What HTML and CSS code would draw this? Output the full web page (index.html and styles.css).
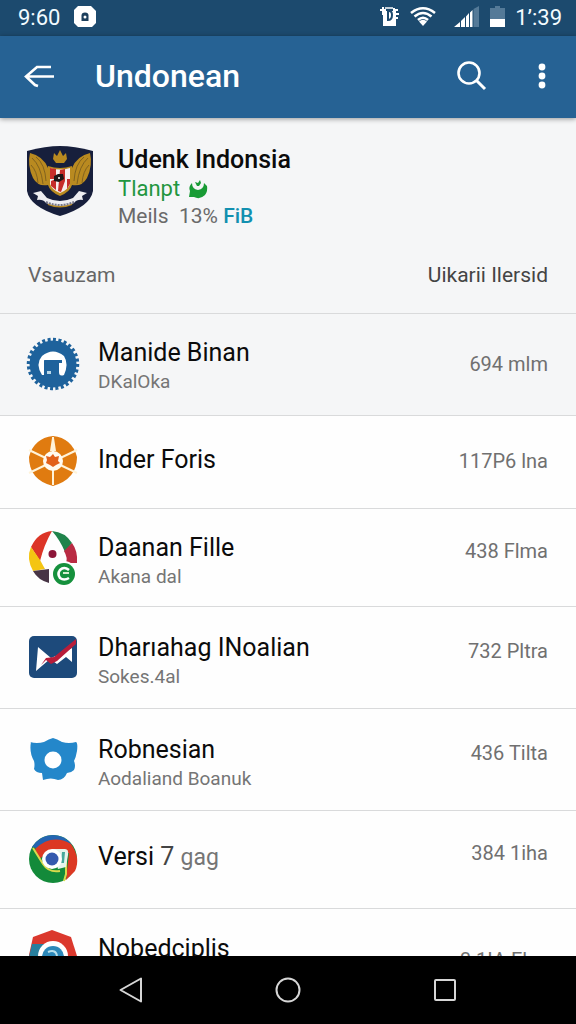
FILE: index.html
```html
<!DOCTYPE html>
<html lang="id">
<head>
<meta charset="utf-8">
<meta name="viewport" content="width=device-width, initial-scale=1">
<title>Undonean</title>
<link rel="stylesheet" href="styles.css">
</head>
<body>
<div class="status">
  <span class="status-time">9:60</span>
  <svg class="status-app" width="22" height="22" viewBox="0 0 22 22"><path d="M4 0h13l5 5v12l-4 4H4l-4-4V4z" fill="#fff"/><path d="M7.500 15V9.500q0-3 3.500-3t3.500 3V15z" fill="#1c3f5c"/><circle cx="11" cy="11" r="1.500" fill="#fff"/></svg>
  <span class="status-icons">
    <svg width="20" height="22" viewBox="0 0 20 22"><path d="M3 5h13v15H3z" fill="#fff"/><path d="M0 4h6M3 1v8M14 2v10M13 4h5M13 8h6M13 12h5" stroke="#fff" stroke-width="2"/><path d="M8 5v9q4 0 4-5 0-4-3-4z" fill="none" stroke="#1c4a6e" stroke-width="2"/><path d="M5 2h8" stroke="#fff" stroke-width="1.5"/></svg>
    <svg width="26" height="20" viewBox="0 0 26 20"><g fill="none" stroke="#fff" stroke-width="2.6"><path d="M1 6Q13-3.500 25 6"/><path d="M4.500 9.500Q13 2.500 21.500 9.500"/><path d="M8 13Q13 8.500 18 13"/></g><path d="M9 14.500Q13 11 17 14.500L13 19z" fill="#fff"/></svg>
    <svg class="signal" width="26" height="22" viewBox="0 0 26 22"><path d="M0 21l6-5v5zM7 15l4-4v10H7zM12 10.500L15 7v14h-3zM16 6.500L18.500 4v17H16z" fill="#fff"/><path d="M19.500 3L25 0v21h-5.500z" fill="#547a98"/></svg>
    <svg class="battery" width="15" height="22" viewBox="0 0 15 22"><path d="M0 2h5V0h5v2h5v11H0z" fill="#547a98"/><path d="M0 13h15v8H0z" fill="#fff"/></svg>
    <span class="status-time">1’:39</span>
  </span>
</div>
<header class="appbar">
  <button class="icon-button" aria-label="Back"><svg width="32" height="26" viewBox="0 0 32 26"><path d="M27 4H13L2 13.500l9 8.500 3 1M2 13.500h28" fill="none" stroke="#fff" stroke-width="2.600"/></svg></button>
  <h1 class="appbar-title">Undonean</h1>
  <button class="icon-button" aria-label="Search"><svg width="32" height="32" viewBox="0 0 32 32"><circle cx="13" cy="13" r="10.500" fill="none" stroke="#fff" stroke-width="2.600"/><path d="M20 20l9 9" stroke="#fff" stroke-width="3"/></svg></button>
  <button class="icon-button more" aria-label="More options"><svg width="8" height="26" viewBox="0 0 8 26"><g fill="#fff"><circle cx="4" cy="4" r="3.400"/><circle cx="4" cy="13" r="3.400"/><circle cx="4" cy="22" r="3.400"/></g></svg></button>
</header>
<main class="content">
  <section class="profile">
    <svg class="crest" width="68" height="72" viewBox="0 0 68 72">
      <path d="M1 6Q20 1 34 1Q48 1 67 6V46Q64 62 34 71Q4 62 1 46z" fill="#171f3c"/>
      <g fill="#b98a20"><path d="M4 8Q17 11 22 23V40Q12 42 7 33Q1 20 4 8zM64 8Q51 11 46 23V40Q56 42 61 33Q67 20 64 8z"/><path d="M28 8l3 3 3-6 3 6 3-3 1 6-3 4h-8l-3-4z"/><path d="M20 53Q34 60 48 53l-2 7q-12 5-24 0z"/></g>
      <g fill="none" stroke="#68501e" stroke-width=".7"><path d="M6 13q9 8 11 26M5 20q6 6 7 18M10 12q9 7 10 24M62 13q-9 8-11 26M63 20q-6 6-7 18M58 12q-9 7-10 24"/></g>
      <path d="M22 21Q34 25 46 21V40Q44 47 34 51Q24 47 22 40z" fill="#b98a20"/>
      <path d="M24 23Q34 26 44 23V39Q42 45 34 48Q26 45 24 39z" fill="#f7eeee"/>
      <path d="M24 23l6 1v10h-6zM34 25l5-1v12l-4 11-3-1zM25 36l5-2v11l-5-4zM41 34h3v5l-3 5z" fill="#c62c2a"/>
      <path d="M28 31l4-2h5l1 5-5 3-5-1z" fill="#1c1517"/><circle cx="33" cy="33" r="1" fill="#fff"/>
      <path d="M7 48l8-2 6 7q13 6 26 0l6-7 8 2-5 3 1 4q-6-1-9 3-14 6-28 0-3-4-9-3l1-4z" fill="#eeeef2"/>
      <path d="M20 57q14 6 28 0" fill="none" stroke="#777789" stroke-width="2" stroke-dasharray="2 1"/>
    </svg>
    <div class="profile-text">
      <h2 class="profile-name">Udenk Indonsia</h2>
      <p class="profile-state">Tlanpt <svg width="20" height="20" viewBox="0 0 20 20"><path d="M4 4Q0 8 2 12l-1 6h5q6 3 11-2 3-4 2-9L16 4q0 6-6 7Q4 10 4 4z" fill="#189b35"/><path d="M7 3l3 1 2-3 1 3-2 3H9z" fill="#189b35"/></svg></p>
      <p class="profile-meta">Meils &nbsp;13% <a class="profile-link" href="#fib">FiB</a></p>
    </div>
  </section>
  <div class="columns"><span>Vsauzam</span><span class="columns-end">Uikarii Ilersid</span></div>
  <ul class="list">
    <li class="row row-tall row-shaded">
      <svg class="row-icon" width="54" height="54" viewBox="0 0 54 54"><circle cx="27" cy="27" r="23.500" fill="#1e629c"/><circle cx="27" cy="27" r="24.500" fill="none" stroke="#1e629c" stroke-width="3.500" pathLength="56" stroke-dasharray="1.100 .9"/><path d="M16 38Q9 27 16 19Q27 10 38 19Q43 27 38 38Q33 40 33 35V24H18v14z" fill="#fff"/><path d="M18 23h18v3h-3v11h-8l-5-5z" fill="#1e629c"/><path d="M21 34h4v3h-4z" fill="#b8d7e8"/></svg>
      <div class="row-text"><h3 class="row-title">Manide Binan</h3><p class="row-sub">DKalOka</p></div>
      <span class="row-value">694 mlm</span>
    </li>
    <li class="row row-short">
      <svg class="row-icon" width="54" height="54" viewBox="0 0 54 54"><path d="M27 2Q46 4 51 23Q51 45 27 52Q3 46 3 23Q8 4 27 2z" fill="#e07b10"/><path d="M27 3v48M3 16l48 23M51 16L3 39" stroke="#fff3d9" stroke-width="2"/><path d="M24 17l2-13h2l2 13z" fill="#fff3d9"/><circle cx="27" cy="27" r="10" fill="#fffaf0"/><path d="M27 20l2 3 4-1-1 5 2 2-4 2-3 2-3-2-4-2 1-3-1-4 4 1z" fill="#e2611b"/></svg>
      <div class="row-text row-text-single"><h3 class="row-title">Inder Foris</h3></div>
      <span class="row-value">117P6 lna</span>
    </li>
    <li class="row row-medium">
      <svg class="row-icon" width="54" height="54" viewBox="0 0 54 54"><path d="M26 1Q12 2 5 17l9 14Q18 15 26 1z" fill="#dc3527"/><path d="M26 1Q39 2 46 13l-7 9Q34 10 26 1z" fill="#20834b"/><path d="M46 13Q52 21 51 33H40Q42 28 38 21z" fill="#b92b43"/><path d="M5 17Q0 28 7 41l12-2-5-9z" fill="#f4c512"/><path d="M7 41l16-2v14Q12 50 7 41z" fill="#473445"/><circle cx="26.500" cy="24" r="4" fill="#8c1538"/><circle cx="38" cy="44" r="13" fill="#fff"/><circle cx="38" cy="44" r="11" fill="#16913d"/><path d="M43 40q-5-4-9 0-3 4 0 8 4 3 9 0" fill="none" stroke="#fff" stroke-width="2.600"/><path d="M37 43h6" stroke="#d6edcf" stroke-width="2"/></svg>
      <div class="row-text row-text-low"><h3 class="row-title">Daanan Fille</h3><p class="row-sub">Akana dal</p></div>
      <span class="row-value row-value-raised">438 Flma</span>
    </li>
    <li class="row row-tall">
      <svg class="row-icon" width="54" height="54" viewBox="0 0 54 54"><rect x="3" y="6" width="48" height="42" rx="5" fill="#1d4a7b"/><path d="M12 17l13 11 7-3 14-7v14l-6-5-9 7-7-5-14 12z" fill="#fff"/><path d="M15 35l5-7 8-1L50 9v5L31 31l-6 3-5-4z" fill="#b81d3a"/></svg>
      <div class="row-text row-text-low"><h3 class="row-title">Dharıahag INoalian</h3><p class="row-sub">Sokes.4al</p></div>
      <span class="row-value row-value-raised">732 Pltra</span>
    </li>
    <li class="row row-tall">
      <svg class="row-icon" width="54" height="54" viewBox="0 0 54 54"><path d="M4 10Q11 12 18 10Q23 7 27 6Q31 7 36 10q7 2 14 0 2 1 1 9-1 6-3 10 2 5 0 9-3 3-7 3-3 7-9 7-7-3-15 0l-1-7q-6 0-8-4 1-4 0-8-5-9-3-19z" fill="#2487ca"/><circle cx="27" cy="28" r="8.500" fill="#fff"/></svg>
      <div class="row-text row-text-low"><h3 class="row-title">Robnesian</h3><p class="row-sub">Aodaliand Boanuk</p></div>
      <span class="row-value row-value-raised">436 Tilta</span>
    </li>
    <li class="row row-medium">
      <svg class="row-icon" width="54" height="54" viewBox="0 0 54 54"><circle cx="27" cy="27" r="24" fill="#138a3a"/><path d="M6 15Q14 3 27 3q12 0 19 10l-18 7z" fill="#2464b1"/><path d="M9 17q17-16 36-5 10 14 4 27l-9 9 3-27H22l-9 6z" fill="#dc3823"/><path d="M7 16l10 16q6 9 17 7M40 24v18l-2 7" fill="none" stroke="#d9da4c" stroke-width="2"/><path d="M26 17h13q4 0 3 6l-2 12-8 2z" fill="#e6f4ec"/><path d="M36 20h3l-1 11h-3z" fill="#47a99c"/><circle cx="26" cy="27" r="10" fill="#fff"/><circle cx="26" cy="27" r="6.500" fill="#3459ae"/></svg>
      <div class="row-text row-text-single"><h3 class="row-title">Versi <span class="row-number">7</span> <span class="row-muted">gag</span></h3></div>
      <span class="row-value row-value-raised">384 1iha</span>
    </li>
    <li class="row row-short">
      <svg class="row-icon" width="54" height="54" viewBox="0 0 54 54"><path d="M26 3l19 7 6 19v22H3V28L7 10z" fill="#db382d"/><path d="M6 17h13l-4 14v20H3V30z" fill="#287f9e"/><circle cx="27" cy="29" r="15" fill="#fff"/><circle cx="27" cy="30" r="11" fill="#2c88b9"/><path d="M22 25q8-3 9 4" fill="none" stroke="#b9e1ed" stroke-width="2"/></svg>
      <div class="row-text row-text-raised"><h3 class="row-title">Nobedciplis</h3></div>
      <span class="row-value row-value-low">3 1IA Elıaı</span>
    </li>
  </ul>
</main>
<nav class="navbar" aria-label="System">
  <button class="nav-button" aria-label="Back"><svg width="28" height="28" viewBox="0 0 28 28"><path d="M24 2.500v23L3.500 14z"/></svg></button>
  <button class="nav-button" aria-label="Home"><svg width="28" height="28" viewBox="0 0 28 28"><circle cx="14" cy="14" r="11.500"/></svg></button>
  <button class="nav-button" aria-label="Recent apps"><svg width="28" height="28" viewBox="0 0 28 28"><rect x="4" y="4" width="20" height="20" rx="1"/></svg></button>
</nav>
</body>
</html>
```
FILE: styles.css
```css
* { box-sizing: border-box; }
body {
  margin: 0;
  height: 100vh;
  display: flex;
  flex-direction: column;
  font-family: Roboto, "Liberation Sans", sans-serif;
  background: #fefefe;
  color: #0b0b0b;
}
h1, h2, h3, p, ul { margin: 0; padding: 0; font-weight: 400; }
svg { display: block; flex: none; overflow: visible; }
button { border: 0; padding: 0; background: none; display: flex; align-items: center; justify-content: center; }

.status {
  flex: none;
  height: 36px;
  padding: 0 14px 2px 18px;
  display: flex;
  align-items: center;
  gap: 14px;
  background: #1c4a6e;
  color: #f2fbff;
}
.status-time { font-size: 22px; }
.status-icons { margin-left: auto; display: flex; align-items: center; gap: 10px; }
.signal { margin-left: 8px; }

.appbar {
  flex: none;
  height: 82px;
  padding: 0 30px 2px 24px;
  display: flex;
  align-items: center;
  background: #266294;
  color: #fff;
  box-shadow: 0 1px 5px rgba(0, 0, 0, .4);
  z-index: 1;
}
.appbar-title { flex: 1; margin-left: 39px; font-size: 32px; font-weight: 500; }
.more { margin-left: 50px; }

.content { flex: 1; min-height: 0; overflow: hidden; }
.profile { display: flex; gap: 24px; padding: 27px 26px 8px; background: #f5f6f7; }
.profile-name { font-size: 25px; line-height: 30px; font-weight: 500; }
.profile-state { display: flex; align-items: center; gap: 8px; font-size: 22px; line-height: 28px; color: #23963f; }
.profile-meta { font-size: 21px; line-height: 26px; color: #6a6a6a; }
.profile-link { color: #1290b0; font-weight: 500; text-decoration: none; }
.columns {
  display: flex;
  justify-content: space-between;
  padding: 24px 28px;
  font-size: 21px;
  line-height: 28px;
  color: #666;
  background: #f5f6f7;
}
.columns-end { color: #444; }

.list { list-style: none; }
.row { display: flex; align-items: center; padding: 0 28px 2px 26px; border-top: 1px solid #d9dadb; }
.row-shaded { background: #f5f6f7; }
.row-tall { height: 102px; }
.row-medium { height: 98px; }
.row-short { height: 93px; }
.row-text { flex: 1; margin-left: 18px; padding-top: 6px; }
.row-title { font-size: 25px; line-height: 30px; }
.row-sub { font-size: 19px; line-height: 27px; color: #757575; }
.row-number { color: #444; }
.row-muted { font-size: 23px; color: #757575; }
.row-value { font-size: 20px; line-height: 28px; color: #707070; }
.row-text-single { padding: 0 0 2px; }
.row-text-low { padding-top: 10px; }
.row-text-raised { padding: 0 0 10px; }
.row-value-raised { padding-bottom: 12px; }
.row-value-low { padding-top: 12px; }

.navbar {
  flex: none;
  height: 68px;
  padding: 0 52px;
  display: flex;
  background: #000;
}
.nav-button { flex: 1; }
.nav-button svg { fill: none; stroke: #d6d6d6; stroke-width: 2; stroke-linejoin: round; }
```
